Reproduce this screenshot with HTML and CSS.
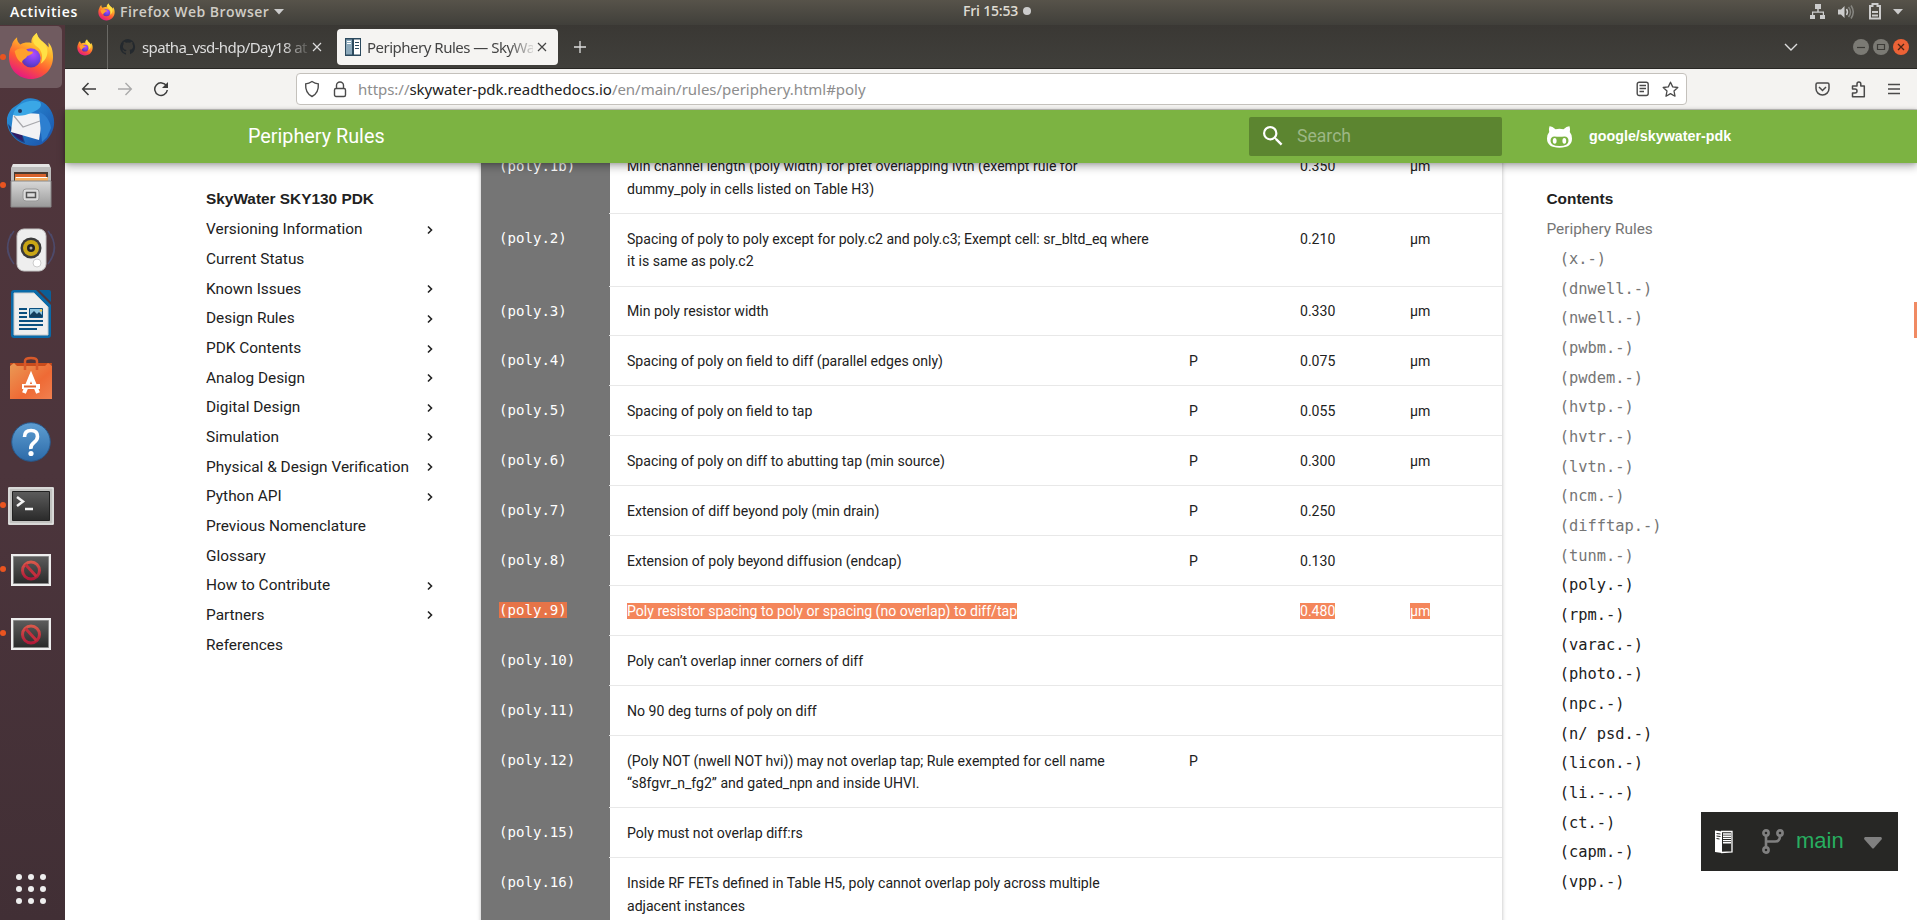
FILE: index.html
```html
<!DOCTYPE html>
<html lang="en">
<head>
<meta charset="utf-8">
<title>Periphery Rules — SkyWater SKY130 PDK</title>
<link rel="stylesheet" href="styles.css">
</head>
<body>
<svg class="defs" width="0" height="0" aria-hidden="true">
  <defs>
    <linearGradient id="fx" x1=".8" y1="0" x2=".3" y2="1"><stop offset="0" stop-color="#fff44f"/><stop offset=".35" stop-color="#ffb02a"/><stop offset=".65" stop-color="#ff5a33"/><stop offset="1" stop-color="#e31587"/></linearGradient>
    <radialGradient id="fxc" cx=".6" cy=".3" r=".8"><stop offset="0" stop-color="#b24bff"/><stop offset=".6" stop-color="#6a3fe0"/><stop offset="1" stop-color="#50339c"/></radialGradient>
    <linearGradient id="tb" x1="0" y1="0" x2="1" y2="1"><stop offset="0" stop-color="#2b9be0"/><stop offset="1" stop-color="#1a4fa8"/></linearGradient>
    <linearGradient id="gray" x1="0" y1="0" x2="0" y2="1"><stop offset="0" stop-color="#d8d8d8"/><stop offset="1" stop-color="#9a9a9a"/></linearGradient>
    <linearGradient id="orange" x1="0" y1="0" x2="1" y2="1"><stop offset="0" stop-color="#ea9a55"/><stop offset=".6" stop-color="#ef6a35"/><stop offset="1" stop-color="#f08050"/></linearGradient>
    <linearGradient id="blue" x1="0" y1="0" x2="0" y2="1"><stop offset="0" stop-color="#5e9ed2"/><stop offset="1" stop-color="#2c6aa8"/></linearGradient>
    <linearGradient id="dark" x1="0" y1="0" x2="0" y2="1"><stop offset="0" stop-color="#5c5c5c"/><stop offset="1" stop-color="#2a2a2a"/></linearGradient>
    <linearGradient id="red" x1="0" y1="0" x2="0" y2="1"><stop offset="0" stop-color="#d9584a"/><stop offset="1" stop-color="#b01838"/></linearGradient>
    <symbol id="firefox" viewBox="0 0 48 48">
      <path fill="url(#fx)" d="M30 0c-4 3-6 6-5.500 10.500C21 9.500 16 10 13 12 10.500 10.500 9 7 9.500 4.500 6 7 4.500 10 4 13 1.500 17 1 21 1 25 1 38 11 48 24 48s23-10 23-23c0-6-1.500-12-5-15 .500 2 .500 3.500.300 5C39 10 31 7 30 0z"/>
      <circle cx="24" cy="26" r="10" fill="url(#fxc)"/>
      <path fill="#ffa02c" d="M7 19c5-4 10-4 14 0l5 .500c0 3-4 3.500-6 4.500-1 3-5 3-5.500 7C10 29 8 24 7 19z"/>
      <path fill="#ffe045" d="M30 0c-4 5-6 10 0 14 6 4 7 12 4 18 6-4 9-11 6-18-2-5-9-7-10-14z"/>
    </symbol>
    <symbol id="blocked" viewBox="0 0 40 32">
      <path fill="#eee" d="M0 0h40v32H0z"/><path fill="url(#dark)" stroke="#888" d="M2.500 2.500h35v27h-35z"/>
      <circle cx="20" cy="16.500" r="8.500" fill="none" stroke="url(#red)" stroke-width="3"/><path stroke="#c42f3d" stroke-width="3" d="M14.500 10.500l11 12"/>
    </symbol>
    <symbol id="chev" viewBox="0 0 8 10"><path fill="none" stroke="#222" stroke-width="1.600" d="M2 1.500l3.500 3.500L2 8.500"/></symbol>
    <symbol id="x" viewBox="0 0 12 12"><path fill="none" stroke="currentColor" stroke-width="1.200" d="M2 2l8 8M10 2l-8 8"/></symbol>
  </defs>
</svg>

<header class="topbar">
  <span class="activities">Activities</span>
  <svg class="app-icon" width="17" height="18"><use href="#firefox"/></svg>
  <span class="app-name">Firefox Web Browser</span>
  <svg width="10" height="6"><path fill="#ccc" d="M0 0h10L5 5.500z"/></svg>
  <span class="clock"><span>Fri 15:53</span><i></i></span>
  <span class="tray">
    <svg width="16" height="16"><path fill="#ccc" d="M5 0h6v5H8.700v2.500H14V11h1v4h-5v-4h2.800V8.700H3.200V11H5v4H0v-4h2V7.500h5.300V5H5z"/></svg>
    <svg width="16" height="16"><path fill="#ccc" d="M0 5.500h3L6.500 2v12L3 10.500H0z"/><path fill="none" stroke="#ccc" stroke-width="1.500" d="M8.500 5q2 3 0 6"/><path fill="none" stroke="#858580" stroke-width="1.500" d="M10.500 3q4 5 0 10M13 1.500q4.500 6.500 0 13"/></svg>
    <svg width="12" height="17"><path fill="none" stroke="#ccc" stroke-width="2" d="M1 3h2.500V1h5v2H11v12.500H1z"/><path fill="#ccc" d="M3 8h6v2H3zm0 3.500h6v2H3z"/></svg>
    <svg width="10" height="6"><path fill="#ccc" d="M0 0h10L5 5.500z"/></svg>
  </span>
</header>

<div class="desktop">
  <nav class="dock">
    <div class="app on run"><svg width="46" height="46"><use href="#firefox"/></svg></div>
    <div class="app"><svg width="48" height="48" viewBox="0 0 48 48">
      <path fill="url(#tb)" d="M13 5C17-1 27-1 33 3c10 4 15 14 14 24-1 8-6 15-12 19-6 3-16 2-22-2C3 38-1 28 0 20c1-5 4-9 7-11z"/>
      <path fill="#1c4184" d="M1 26c2 10 9 17 17 19l-3-10L5 30z"/><path fill="#321b64" d="M4 34c4 4 7 7 12 9l-1-6z"/>
      <path fill="#f2f2f4" d="M6 17q12-3 27-1l2 8-3 18L4 34z"/><path fill="none" stroke="#a8a8ac" stroke-width="1.200" d="M7 18l9 11 17-6"/>
      <path fill="#3aa7e6" d="M7 14c3-8 15-14 26-10 3 4-1 8-9 11-5 2-11 4-18 2z"/><path fill="#2d7fd0" d="M32 14c6 2 11 8 12 16l-4 9-5 5-1-9z"/><circle cx="13" cy="13" r="2" fill="#203860"/>
    </svg></div>
    <div class="app run"><svg width="44" height="44" viewBox="0 0 44 44">
      <path fill="#bdbdbd" d="M4 0h36l2 4v20H2V4z"/><path fill="#e4e4e4" d="M4 0h36l1 3H3z"/><path fill="#4a3a30" d="M5 8h34v10H5z"/><path fill="#d8622c" d="M6 10h31v7H6z"/><path fill="#f7b062" d="M6 13h33v5H6z"/><path fill="#fff" d="M7 13h31v1H7z"/>
      <path fill="url(#gray)" stroke="#888" d="M2 17h40v26H2z"/><rect x="14" y="25" width="16" height="12" rx="3" fill="#ddd" stroke="#999"/><path fill="#ddd" stroke="#555" stroke-width="1.500" d="M17.500 28.500h9v5h-9z"/>
    </svg></div>
    <div class="app"><svg width="50" height="44" viewBox="0 0 50 44">
      <path fill="none" stroke="#4d4a6a" stroke-width="1.500" d="M8 3Q-5 20 8 36M5 6q-7 14 1 27M42 3q13 17 0 33M45 6q7 14-1 27"/>
      <rect x="11" y="1" width="29" height="42" rx="7" fill="#eee" stroke="#c4c4c4"/><circle cx="25" cy="20" r="10.500" fill="#3a3a3a"/><circle cx="25" cy="20" r="8" fill="#c9a615"/><circle cx="25" cy="20" r="4" fill="#222"/><circle cx="25" cy="20" r="1.500" fill="#aaa"/><circle cx="31" cy="35" r="4" fill="#fff" stroke="#ccc"/>
    </svg></div>
    <div class="app"><svg width="40" height="48" viewBox="0 0 40 48">
      <path fill="#0a6aa8" d="M3 0h22l15 15v30q0 3-3 3H3q-3 0-3-3V3q0-3 3-3z"/><path fill="#eee" stroke="#ccc" d="M3 3h20l14 14v28H3z"/><path fill="#0b5f97" d="M28 0h10q2 0 2 2v10z"/>
      <path fill="none" stroke="#0a4f80" stroke-width="2" d="M8 19h8M8 23h8M8 27h8M8 31h24M8 35h24M8 39h18"/><path fill="#8fc5e0" stroke="#0a4f80" d="M18.500 18.500h13v9h-13z"/><path fill="#123f5f" d="M19 27v-2l4-4 3 3 2-2 3 3v2z"/><circle cx="30" cy="20.500" r="1.300" fill="#f3c64b"/>
    </svg></div>
    <div class="app"><svg width="42" height="44" viewBox="0 0 42 44">
      <path fill="#c94b1c" d="M0 7h42l-1 6H1z"/><path fill="url(#orange)" d="M0 10l4-3 3 3h28l3-3 4 3v33H0z"/><path fill="none" stroke="#d8592a" stroke-width="2.500" d="M15 14V5q0-3 6-3t6 3v9"/>
      <path fill="none" stroke="#fff" stroke-width="4" d="M14 37l7-17 7 17"/><path fill="#fff" d="M12 28h18v5H12z"/><path fill="#e06530" d="M14 29.500h12v2H14z"/>
    </svg></div>
    <div class="app"><svg width="40" height="40" viewBox="0 0 40 40"><circle cx="20" cy="20" r="19.300" fill="url(#blue)" stroke="#28598c"/><path fill="none" stroke="#fff" stroke-width="3.600" d="M13.500 15q0-6.500 6.500-6.500t6.500 6q0 3.500-3.500 6t-3.200 6.500"/><circle cx="20" cy="31.500" r="2.600" fill="#fff"/></svg></div>
    <div class="app run"><svg width="46" height="38" viewBox="0 0 46 38"><rect width="46" height="38" rx="1" fill="#c2c2c0"/><path fill="none" stroke="#eee" d="M1 1h44v36H1z"/><path fill="url(#dark)" stroke="#222" d="M4.500 4.500h37v29h-37z"/><path fill="none" stroke="#f4f4f4" stroke-width="2.500" d="M9 10l6 4.500L9 19M17 22h8"/></svg></div>
    <div class="app run"><svg width="40" height="32"><use href="#blocked"/></svg></div>
    <div class="app run"><svg width="40" height="32"><use href="#blocked"/></svg></div>
    <div class="all-apps"><i></i><i></i><i></i><i></i><i></i><i></i><i></i><i></i><i></i></div>
  </nav>

  <main class="browser">
    <div class="tabs">
      <div class="pinned"><svg width="16" height="17"><use href="#firefox"/></svg></div>
      <div class="tab">
        <svg width="16" height="16" viewBox="0 0 16 16"><path fill="#24292e" d="M8 0a8 8 0 0 0-2.530 15.590c.4.070.550-.170.550-.380v-1.490C4 14.090 3.480 12.750 3.320 12.300c-.090-.230-.480-.940-.820-1.130-.280-.150-.680-.520-.010-.530.630-.010 1.080.580 1.230.820.720 1.210 1.870.870 2.330.660.070-.520.280-.870.510-1.070-1.780-.200-3.640-.890-3.640-3.950 0-.870.310-1.590.820-2.150-.080-.200-.360-1.020.080-2.120 0 0 .670-.210 2.200.820a7.600 7.600 0 0 1 4 0c1.530-1.040 2.200-.820 2.200-.820.440 1.100.160 1.920.080 2.120.510.560.820 1.270.820 2.150 0 3.070-1.870 3.750-3.650 3.950.290.250.540.730.540 1.480v2.200c0 .210.150.460.550.380A8 8 0 0 0 8 0z"/></svg>
        <span class="label">spatha_vsd-hdp/Day18 at</span><svg class="close" width="12" height="12"><use href="#x"/></svg>
      </div>
      <div class="tab active">
        <svg width="16" height="18" viewBox="0 0 16 18"><path fill="#2c4a5e" d="M0 0h16v18H0z"/><path fill="#8ca9bb" d="M1 1.500h6v15H1z"/><path fill="#fff" d="M9 1.500h6v15H9z"/><path stroke="#fff" d="M2 3.500h4M2 5.500h4"/><path stroke="#2c4a5e" d="M10 4.500h4M10 7.500h4M10 10.500h4"/></svg>
        <span class="label">Periphery Rules — SkyWa</span><svg class="close" width="12" height="12"><use href="#x"/></svg>
      </div>
      <svg class="plus" width="14" height="14"><path stroke="#ddd" stroke-width="1.300" d="M7 1v12M1 7h12"/></svg>
      <svg class="list" width="14" height="8"><path fill="none" stroke="#ddd" stroke-width="1.400" d="M1 1l6 6 6-6"/></svg>
      <div class="winbtns">
        <svg width="16" height="16"><circle cx="8" cy="8" r="8" fill="#7b7a74"/><path stroke="#3c3b37" stroke-width="1.200" d="M4 8.500h8"/></svg>
        <svg width="16" height="16"><circle cx="8" cy="8" r="8" fill="#7b7a74"/><path fill="none" stroke="#3c3b37" stroke-width="1.200" d="M4.500 5.500h7v5h-7z"/></svg>
        <svg width="16" height="16"><circle cx="8" cy="8" r="8" fill="#ec6236"/><path stroke="#4a2414" stroke-width="1.300" d="M5 5l6 6M11 5l-6 6"/></svg>
      </div>
    </div>

    <div class="toolbar">
      <svg width="16" height="16"><path fill="none" stroke="#3d3d3d" stroke-width="1.500" d="M15 8H2M7.500 2L1.700 8l5.800 6"/></svg>
      <svg class="forward" width="16" height="16"><path fill="none" stroke="#aaa" stroke-width="1.400" d="M1 8h13M8.500 2l5.800 6-5.800 6"/></svg>
      <svg class="reload" width="16" height="16"><path fill="none" stroke="#3d3d3d" stroke-width="1.500" d="M13.500 5A6.300 6.300 0 1 0 14.300 9"/><path fill="#3d3d3d" d="M15 1v6H9z"/></svg>
      <div class="urlbox">
        <svg width="16" height="18" viewBox="0 0 16 18"><path fill="none" stroke="#4a4a4a" stroke-width="1.400" d="M8 1.500q3 2 6.300 2.400Q15 13 8 16.500 1 13 1.700 3.900 5 3.500 8 1.500z"/></svg>
        <svg class="lock" width="14" height="17" viewBox="0 0 14 17"><rect x="1.500" y="7.500" width="11" height="8" rx="1.500" fill="none" stroke="#4a4a4a" stroke-width="1.400"/><path fill="none" stroke="#4a4a4a" stroke-width="1.400" d="M3.500 7.500V4.500a3.500 3.500 0 0 1 7 0v3"/></svg>
        <span class="url">https://<b>skywater-pdk.readthedocs.io</b>/en/main/rules/periphery.html#poly</span>
        <svg class="reader" width="14" height="16"><rect x="1.200" y="1.200" width="11" height="13.300" rx="2" fill="none" stroke="#4a4a4a" stroke-width="1.400"/><path stroke="#4a4a4a" stroke-width="1.300" d="M3.500 4.500h6.500M3.500 7.500h6.500M3.500 10.500h4.500"/></svg>
        <svg width="17" height="17" viewBox="0 0 17 17"><path fill="none" stroke="#4a4a4a" stroke-width="1.300" stroke-linejoin="round" d="M8.500 1.200l2.200 4.700 5.100.6-3.800 3.500 1 5.200-4.500-2.600L4 15.200l1-5.200-3.800-3.500 5.100-.6z"/></svg>
      </div>
      <svg class="pocket" width="15" height="14"><path fill="none" stroke="#4a4a4a" stroke-width="1.500" d="M2.500 1h10q1.500 0 1.500 1.500V6.500a6.500 6.500 0 0 1-13 0v-4Q1 1 2.500 1z"/><path fill="none" stroke="#4a4a4a" stroke-width="1.500" d="M4 5l3.500 3.500L11 5"/></svg>
      <svg class="ext" width="15" height="17"><path fill="none" stroke="#4a4a4a" stroke-width="1.500" stroke-linejoin="round" d="M1.500 15.700V12H4a2 2 0 0 0 0-4H1.500V5H6V3a1.900 1.900 0 0 1 3.800 0v2h3.500v10.700z"/></svg>
      <svg width="12" height="12"><path stroke="#4a4a4a" stroke-width="1.400" d="M0 1.500h12M0 6h12M0 10.500h12"/></svg>
    </div>

    <div class="masthead">
      <span class="title">Periphery Rules</span>
      <div class="search"><svg width="20" height="20" viewBox="3 3 18 18"><path fill="#fff" d="M9.500 3A6.500 6.500 0 0 1 16 9.500c0 1.610-.590 3.090-1.560 4.230l.270.270h.790l5 5-1.500 1.500-5-5v-.790l-.270-.270A6.520 6.520 0 0 1 9.500 16 6.500 6.500 0 0 1 3 9.500 6.500 6.500 0 0 1 9.500 3m0 2C7 5 5 7 5 9.500S7 14 9.500 14 14 12 14 9.500 12 5 9.500 5z"/></svg><span>Search</span></div>
      <div class="repo">
        <svg width="25" height="22" viewBox="0 0 25 22"><path fill="#fff" d="M2.500.300Q5 0 8.500 3.200q4-1 8 0Q20 0 22.500.300q1 3 .300 5.700Q25 8.500 25 12.500 25 21.700 12.500 21.700T0 12.500Q0 8.500 2.200 6 1.500 3 2.500.300z"/><path fill="#7cb342" d="M7.500 10.500q5 .700 10 0 4 0 4 4.500 0 5-9 5t-9-5q0-4.500 4-4.500z"/><ellipse cx="7.700" cy="14.800" rx="1.900" ry="2.900" fill="#fff"/><ellipse cx="17.300" cy="14.800" rx="1.900" ry="2.900" fill="#fff"/></svg>
        <b>google/skywater-pdk</b>
      </div>
    </div>

    <div class="page">
      <aside class="nav">
        <b>SkyWater SKY130 PDK</b>
        <a>Versioning Information<svg><use href="#chev"/></svg></a>
        <a>Current Status</a>
        <a>Known Issues<svg><use href="#chev"/></svg></a>
        <a>Design Rules<svg><use href="#chev"/></svg></a>
        <a>PDK Contents<svg><use href="#chev"/></svg></a>
        <a>Analog Design<svg><use href="#chev"/></svg></a>
        <a>Digital Design<svg><use href="#chev"/></svg></a>
        <a>Simulation<svg><use href="#chev"/></svg></a>
        <a>Physical &amp; Design Verification<svg><use href="#chev"/></svg></a>
        <a>Python API<svg><use href="#chev"/></svg></a>
        <a>Previous Nomenclature</a>
        <a>Glossary</a>
        <a>How to Contribute<svg><use href="#chev"/></svg></a>
        <a>Partners<svg><use href="#chev"/></svg></a>
        <a>References</a>
      </aside>

      <section class="rules">
        <div class="row"><code>(poly.1b)</code><p>Min channel length (poly width) for pfet overlapping lvtn (exempt rule for<br>dummy_poly in cells listed on Table H3)</p><span></span><span>0.350</span><span>µm</span></div>
        <div class="row"><code>(poly.2)</code><p>Spacing of poly to poly except for poly.c2 and poly.c3; Exempt cell: sr_bltd_eq where<br>it is same as poly.c2</p><span></span><span>0.210</span><span>µm</span></div>
        <div class="row"><code>(poly.3)</code><p>Min poly resistor width</p><span></span><span>0.330</span><span>µm</span></div>
        <div class="row"><code>(poly.4)</code><p>Spacing of poly on field to diff (parallel edges only)</p><span>P</span><span>0.075</span><span>µm</span></div>
        <div class="row"><code>(poly.5)</code><p>Spacing of poly on field to tap</p><span>P</span><span>0.055</span><span>µm</span></div>
        <div class="row"><code>(poly.6)</code><p>Spacing of poly on diff to abutting tap (min source)</p><span>P</span><span>0.300</span><span>µm</span></div>
        <div class="row"><code>(poly.7)</code><p>Extension of diff beyond poly (min drain)</p><span>P</span><span>0.250</span><span></span></div>
        <div class="row"><code>(poly.8)</code><p>Extension of poly beyond diffusion (endcap)</p><span>P</span><span>0.130</span><span></span></div>
        <div class="row"><code><mark>(poly.9)</mark></code><p><mark>Poly resistor spacing to poly or spacing (no overlap) to diff/tap</mark></p><span></span><span><mark>0.480</mark></span><span><mark>µm</mark></span></div>
        <div class="row"><code>(poly.10)</code><p>Poly can’t overlap inner corners of diff</p></div>
        <div class="row"><code>(poly.11)</code><p>No 90 deg turns of poly on diff</p></div>
        <div class="row"><code>(poly.12)</code><p>(Poly NOT (nwell NOT hvi)) may not overlap tap; Rule exempted for cell name<br>“s8fgvr_n_fg2” and gated_npn and inside UHVI.</p><span>P</span></div>
        <div class="row"><code>(poly.15)</code><p>Poly must not overlap diff:rs</p></div>
        <div class="row"><code>(poly.16)</code><p>Inside RF FETs defined in Table H5, poly cannot overlap poly across multiple<br>adjacent instances</p></div>
      </section>

      <aside class="toc">
        <b>Contents</b>
        <a class="seen top">Periphery Rules</a>
        <a class="seen">(x.-)</a><a class="seen">(dnwell.-)</a><a class="seen">(nwell.-)</a><a class="seen">(pwbm.-)</a><a class="seen">(pwdem.-)</a><a class="seen">(hvtp.-)</a><a class="seen">(hvtr.-)</a><a class="seen">(lvtn.-)</a><a class="seen">(ncm.-)</a><a class="seen">(difftap.-)</a><a class="seen">(tunm.-)</a>
        <a>(poly.-)</a><a>(rpm.-)</a><a>(varac.-)</a><a>(photo.-)</a><a>(npc.-)</a><a>(n/ psd.-)</a><a>(licon.-)</a><a>(li.-.-)</a><a>(ct.-)</a><a>(capm.-)</a><a>(vpp.-)</a>
      </aside>

      <div class="version">
        <svg width="18" height="24" viewBox="0 0 18 24"><path fill="#fff" d="M0 .5L7 1.500V23L0 22z"/><path fill="none" stroke="#fff" stroke-width="1.300" d="M6 1.500h11V22l-11 .500"/><path stroke="#fff" stroke-width="1.400" d="M8 4h8M8 6.200h8M8 8.400h8M8 10.600h8M8 12.800h8"/><path stroke="#272725" d="M1.500 3.500l4 .5M1.500 6l4 .5M1.500 8.500l3 .5"/></svg>
        <svg class="branch" width="22" height="25" viewBox="0 0 22 25"><g fill="none" stroke="#808080" stroke-width="2.600"><circle cx="4" cy="4" r="2.600"/><circle cx="18" cy="4" r="2.600"/><circle cx="4" cy="21" r="2.600"/><path d="M4 6.500v12M18 6.500q0 6-5 6H4"/></g></svg>
        <span>main</span>
        <svg class="caret" width="18" height="12"><path fill="#808080" d="M1 0h16q1.500 1 .5 2.500L10 11q-1 1-2 0L.5 2.500Q-.5 1 1 0z"/></svg>
      </div>
      <i class="scroll"></i>
    </div>
  </main>
</div>
</body>
</html>
```
FILE: styles.css
```css
* { box-sizing: border-box; }
body { margin: 0; width: 1917px; height: 920px; overflow: hidden; background: #fff; font-family: Roboto, "Noto Sans", sans-serif; display: flex; flex-direction: column; }
svg { display: block; flex: none; }
.defs { position: absolute; }

.topbar { flex: none; position: relative; height: 25px; display: flex; align-items: center; padding: 0 14px 2px 10px; background: linear-gradient(#57534a, #403f3a); color: #dfdbd2; font: 600 14px "Open Sans", "Noto Sans", sans-serif; white-space: nowrap; }
.activities { width: 88px; color: #fff; letter-spacing: .65px; }
.app-name { width: 150px; margin: 0 5px 0 5px; letter-spacing: .48px; color: #d0cdc6; }
.app-name + svg { margin-left: -1px; }
.app-icon { margin-top: 1px; }
.clock { position: absolute; left: 963px; top: 1px; display: flex; align-items: center; gap: 5px; font-size: 14px; letter-spacing: -.2px; }
.clock i { width: 8px; height: 8px; border-radius: 50%; background: #ccc; }
.tray { margin-left: auto; display: flex; align-items: center; gap: 15px; }
.tray svg:nth-child(2) { margin-left: -3px; }
.tray svg:nth-child(4) { margin-left: -3px; }

.desktop { flex: 1; min-height: 0; display: flex; }
.dock { flex: none; width: 65px; padding: 1px 3px 0 0; background: linear-gradient(#50353b, #4c353c 50%, #412f35); display: flex; flex-direction: column; gap: 2px; }
.app { position: relative; flex: none; height: 62px; display: flex; align-items: center; justify-content: center; }
.app + .app { padding-top: 1px; }
.on { background: #705b60; border-radius: 0 5px 5px 0; }
.on svg { margin-top: -2px; }
.run::before { content: ""; position: absolute; left: 0; top: 28px; width: 6px; height: 6px; border-radius: 50%; background: #e95420; }
.all-apps { margin: auto auto 16px; display: grid; grid-template-columns: repeat(3, 6px); gap: 6px; }
.all-apps i { height: 6px; border-radius: 50%; background: #eee; }

.browser { flex: 1; min-width: 0; display: flex; flex-direction: column; }
.tabs { flex: none; height: 44px; display: flex; align-items: center; background: linear-gradient(#3a3834, #403f3b); border-bottom: 1px solid #282724; font: 15px "Noto Sans", sans-serif; color: #ddd; }
.pinned { width: 43px; height: 44px; padding: 14px 0 0 12px; border-right: 1px solid #6a6965; }
.tab { width: 221px; height: 36px; margin-top: 1px; padding: 0 10px 0 8px; display: flex; align-items: center; border-radius: 4px; }
.tab:not(.active) { margin-right: 4px; margin-left: 4px; }
.active { background: #f5f4f2; color: #444; }
.label { width: 169px; margin: 0 3px 0 6px; overflow: hidden; white-space: nowrap; letter-spacing: -.6px; -webkit-mask-image: linear-gradient(90deg, #000 85%, rgba(0,0,0,.15)); mask-image: linear-gradient(90deg, #000 85%, rgba(0,0,0,.15)); }
.active .label { letter-spacing: -.5px; }
.plus { margin-left: 15px; }
.list { margin-left: auto; }
.winbtns { display: flex; gap: 4px; margin: 0 8px 0 55px; }

.toolbar { flex: none; height: 41px; display: flex; align-items: center; padding: 0 17px 0 16px; background: #f4f3f1; border-bottom: 1px solid #c9c7c4; }
.forward { margin-left: 20px; }
.reload { margin-left: 20px; }
.urlbox { margin-left: 127px; width: 1391px; height: 32px; display: flex; align-items: center; padding: 0 7px; background: #fff; border: 1px solid #c4c1bc; border-radius: 4px; }
.lock { margin-left: 13px; }
.url { margin-left: 11px; font: 15px "Noto Sans", sans-serif; color: #8d8d8d; letter-spacing: -.03px; white-space: nowrap; }
.url b { font-weight: 400; color: #222; }
.reader { margin: 0 12px 0 auto; }
.pocket { margin-left: auto; }
.ext { margin: 0 22px 0 21px; }

.masthead { flex: none; position: relative; z-index: 2; height: 53px; display: flex; align-items: center; padding-left: 183px; background: #7cb342; color: #fff; box-shadow: 0 0 4px rgba(0,0,0,.2), 0 4px 8px rgba(0,0,0,.28); }
.title { width: 1001px; font-size: 19.800px; }
.search { width: 253px; height: 39px; display: flex; align-items: center; gap: 14px; padding: 0 14px; border-radius: 2px; background: #5c8530; font-size: 17.600px; color: #9db785; }
.search svg { margin-top: -2px; }
.search span { margin-top: -1px; }
.repo { display: flex; align-items: center; gap: 17px; margin-left: 45px; font: 14.300px "Liberation Sans", sans-serif; }
.repo b { margin-top: -2px; }

.page { flex: 1; min-height: 0; position: relative; display: flex; overflow: hidden; color: #212121; }
.nav { width: 416px; padding: 21px 46px 0 141px; display: flex; flex-direction: column; font-size: 15.400px; white-space: nowrap; }
.nav b, .toc b { height: 29.670px; font: 700 15.400px/29.670px "Liberation Sans", sans-serif; }
.nav a { height: 29.670px; flex: none; display: flex; align-items: center; justify-content: space-between; padding-top: 1.800px; }
.nav svg { width: 8px; height: 10px; margin: 1px 1px 0 0; }
.rules { flex: none; align-self: flex-start; width: 1021px; margin-top: -21.420px; box-shadow: 0 0 4px rgba(0,0,0,.28); font-size: 14.080px; line-height: 22.530px; }
.row { display: grid; grid-template-columns: 129px 562px 110px 110px 110px; background: linear-gradient(90deg, #757575 129px, transparent 129px); }
.row + .row { border-top: 1px solid; border-image: linear-gradient(90deg, #757575 129px, #e8e8e8 129px) 1; }
.row p, .row span { margin: 0; padding: 13.800px 0 0 18px; }
.row span:nth-child(3) { padding-left: 17px; }
.row p { padding: 13.800px 0 12.600px 17px; white-space: nowrap; }
.row code { padding: 13px 0 0 18px; font-family: "DejaVu Sans Mono", monospace; font-size: 14.080px; color: #fff; }
mark { background: #f4865b; color: #fff; }
code mark { background: #e67448; }
.toc { padding: 21px 0 0 44.500px; display: flex; flex-direction: column; }
.toc a { height: 29.670px; flex: none; line-height: 29.670px; padding: 1.800px 0 0 13.200px; font-family: "DejaVu Sans Mono", monospace; font-size: 15.400px; }
.toc .seen { color: #757575; }
.toc .top { padding: 1.800px 0 0; font-family: Roboto, sans-serif; }
.version { position: absolute; right: 19px; bottom: 49px; width: 197px; height: 59px; display: flex; align-items: center; padding-left: 14px; background: #272725; color: #27ae60; font: 22px "Liberation Sans", sans-serif; }
.version span { margin-top: -2px; }
.branch { margin: 0 12px 0 29px; }
.caret { margin: 2px 0 0 20px; }
.scroll { position: absolute; right: 0; top: 139px; width: 3px; height: 36px; background: #f08a63; }
```
